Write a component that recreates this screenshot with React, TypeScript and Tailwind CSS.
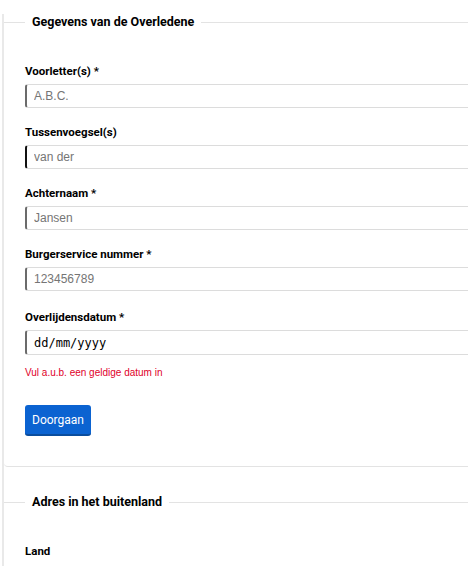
import React from "react"

const sans = "font-['Roboto','Liberation_Sans',Arial,sans-serif]"

function Field({
  label,
  placeholder,
  focused,
}: {
  label: string
  placeholder: string
  focused?: boolean
}) {
  return (
    <div className="mb-[17px]">
      <label className="block h-[14px] text-[11.5px] leading-[14px] font-bold text-black">{label}</label>
      <input
        type="text"
        placeholder={placeholder}
        className={`mt-[6px] block h-[24px] w-full rounded-[3px] border border-[#dcdcdc] border-l-2 bg-white pl-[7px] text-[12px] text-black placeholder:text-[#757575] outline-none font-['Liberation_Sans',Arial,sans-serif] ${
          focused ? "border-l-[#111]" : "border-l-[#6b6b6b]"
        }`}
      />
    </div>
  )
}

export default function App() {
  return (
    <div className={`w-[468px] overflow-hidden bg-white ${sans}`}>
      <div className="ml-[2px] w-[520px] border-l-2 border-[#e9e9e9]">
        <fieldset className="mt-[14px] rounded-bl-[4px] border border-l-0 border-[#e3e3e3] pl-[21px] pb-[30px]">
          <legend className="h-[16px] px-[7px] text-[12.5px] leading-[16px] font-bold text-black">
            Gegevens van de Overledene
          </legend>
          <div className="mt-[34px]">
            <Field label="Voorletter(s) *" placeholder="A.B.C." />
            <Field label="Tussenvoegsel(s)" placeholder="van der" focused />
            <Field label="Achternaam *" placeholder="Jansen" />
            <Field label="Burgerservice nummer *" placeholder="123456789" />
            <div className="pt-[2px]">
              <label className="block h-[14px] text-[11.5px] leading-[14px] font-bold text-black">
                Overlijdensdatum *
              </label>
              <input
                type="text"
                defaultValue="dd/mm/yyyy"
                className="mt-[6px] block h-[25px] w-full rounded-[3px] border border-[#dcdcdc] border-l-2 border-l-[#6b6b6b] bg-white pl-[7px] text-[12px] text-black outline-none font-['DejaVu_Sans_Mono',monospace]"
              />
              <p className="mt-[11px] text-[10px] leading-[13px] text-[#e0002a] font-['Liberation_Sans',Arial,sans-serif]">
                Vul a.u.b. een geldige datum in
              </p>
            </div>
            <button className="mt-[26px] h-[31px] w-[66px] rounded-[3px] border-b-2 border-[#0a4d9e] bg-[#0b63d1] text-[12px] text-white">
              Doorgaan
            </button>
          </div>
        </fieldset>
        <fieldset className="mt-[27px] rounded-bl-[4px] border border-l-0 border-[#e3e3e3] pl-[21px] pb-[30px]">
          <legend className="h-[16px] px-[7px] text-[12.5px] leading-[16px] font-bold text-black">
            Adres in het buitenland
          </legend>
          <div className="mt-[34px]">
            <label className="block h-[14px] text-[11.5px] leading-[14px] font-bold text-black">Land</label>
          </div>
        </fieldset>
      </div>
    </div>
  )
}
